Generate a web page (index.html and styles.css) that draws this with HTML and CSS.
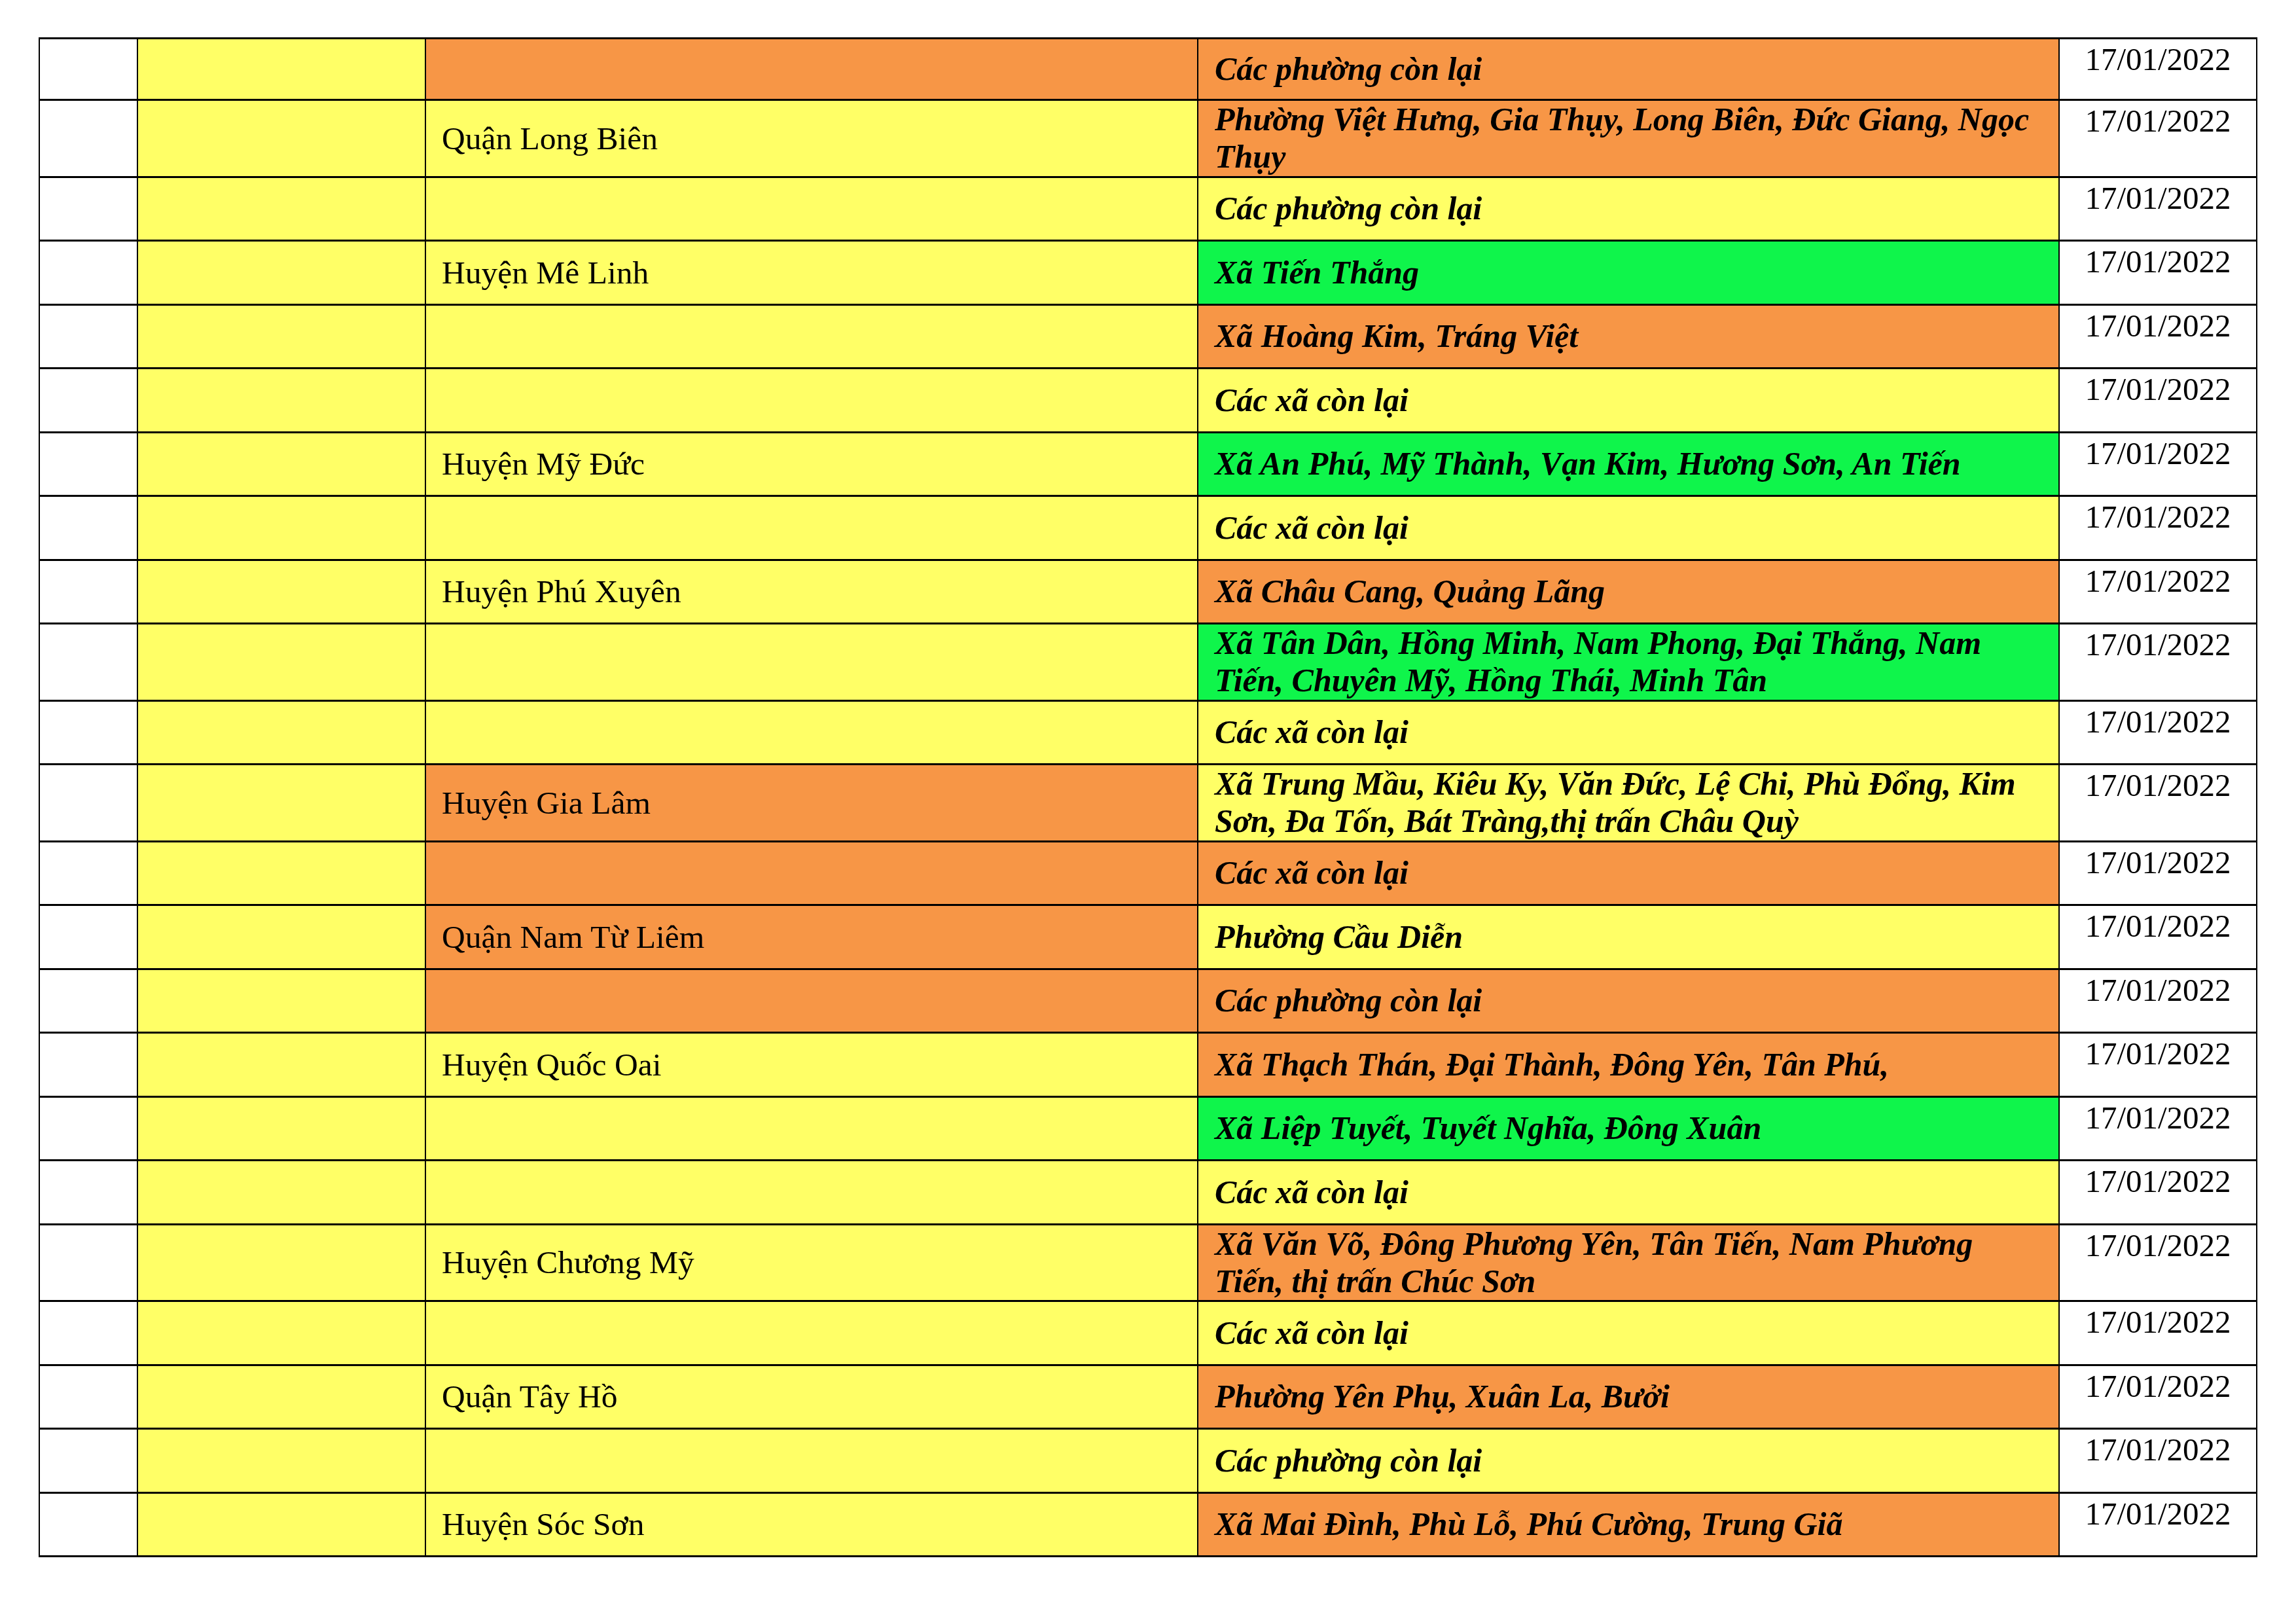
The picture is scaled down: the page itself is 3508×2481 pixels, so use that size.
FILE: index.html
```html
<!DOCTYPE html>
<html lang="vi">
<head>
<meta charset="utf-8">
<title>Danh sách</title>
<link rel="stylesheet" href="styles.css">
</head>
<body>
<table class="sheet">
  <colgroup>
    <col class="c-stt"><col class="c-city"><col class="c-dist"><col class="c-ward"><col class="c-date">
  </colgroup>
  <tbody>
    <tr class="first"><td class="w"></td><td class="y"></td><td class="dist o"></td><td class="ward o">Các phường còn lại</td><td class="date">17/01/2022</td></tr>
    <tr class="two"><td class="w"></td><td class="y"></td><td class="dist y">Quận Long Biên</td><td class="ward o">Phường Việt Hưng, Gia Thụy, Long Biên, Đức Giang, Ngọc<br>Thụy</td><td class="date">17/01/2022</td></tr>
    <tr class="one"><td class="w"></td><td class="y"></td><td class="dist y"></td><td class="ward y">Các phường còn lại</td><td class="date">17/01/2022</td></tr>
    <tr class="one"><td class="w"></td><td class="y"></td><td class="dist y">Huyện Mê Linh</td><td class="ward g">Xã Tiến Thắng</td><td class="date">17/01/2022</td></tr>
    <tr class="one"><td class="w"></td><td class="y"></td><td class="dist y"></td><td class="ward o">Xã Hoàng Kim, Tráng Việt</td><td class="date">17/01/2022</td></tr>
    <tr class="one"><td class="w"></td><td class="y"></td><td class="dist y"></td><td class="ward y">Các xã còn lại</td><td class="date">17/01/2022</td></tr>
    <tr class="one"><td class="w"></td><td class="y"></td><td class="dist y">Huyện Mỹ Đức</td><td class="ward g">Xã An Phú, Mỹ Thành, Vạn Kim, Hương Sơn, An Tiến</td><td class="date">17/01/2022</td></tr>
    <tr class="one"><td class="w"></td><td class="y"></td><td class="dist y"></td><td class="ward y">Các xã còn lại</td><td class="date">17/01/2022</td></tr>
    <tr class="one"><td class="w"></td><td class="y"></td><td class="dist y">Huyện Phú Xuyên</td><td class="ward o">Xã Châu Cang, Quảng Lãng</td><td class="date">17/01/2022</td></tr>
    <tr class="two"><td class="w"></td><td class="y"></td><td class="dist y"></td><td class="ward g">Xã Tân Dân, Hồng Minh, Nam Phong, Đại Thắng, Nam<br>Tiến, Chuyên Mỹ, Hồng Thái, Minh Tân</td><td class="date">17/01/2022</td></tr>
    <tr class="one"><td class="w"></td><td class="y"></td><td class="dist y"></td><td class="ward y">Các xã còn lại</td><td class="date">17/01/2022</td></tr>
    <tr class="two"><td class="w"></td><td class="y"></td><td class="dist o">Huyện Gia Lâm</td><td class="ward y">Xã Trung Mầu, Kiêu Ky, Văn Đức, Lệ Chi, Phù Đổng, Kim<br>Sơn, Đa Tốn, Bát Tràng,thị trấn Châu Quỳ</td><td class="date">17/01/2022</td></tr>
    <tr class="one"><td class="w"></td><td class="y"></td><td class="dist o"></td><td class="ward o">Các xã còn lại</td><td class="date">17/01/2022</td></tr>
    <tr class="one"><td class="w"></td><td class="y"></td><td class="dist o">Quận Nam Từ Liêm</td><td class="ward y">Phường Cầu Diễn</td><td class="date">17/01/2022</td></tr>
    <tr class="one"><td class="w"></td><td class="y"></td><td class="dist o"></td><td class="ward o">Các phường còn lại</td><td class="date">17/01/2022</td></tr>
    <tr class="one"><td class="w"></td><td class="y"></td><td class="dist y">Huyện Quốc Oai</td><td class="ward o">Xã Thạch Thán, Đại Thành, Đông Yên, Tân Phú,</td><td class="date">17/01/2022</td></tr>
    <tr class="one"><td class="w"></td><td class="y"></td><td class="dist y"></td><td class="ward g">Xã Liệp Tuyết, Tuyết Nghĩa, Đông Xuân</td><td class="date">17/01/2022</td></tr>
    <tr class="one"><td class="w"></td><td class="y"></td><td class="dist y"></td><td class="ward y">Các xã còn lại</td><td class="date">17/01/2022</td></tr>
    <tr class="two"><td class="w"></td><td class="y"></td><td class="dist y">Huyện Chương Mỹ</td><td class="ward o">Xã Văn Võ, Đông Phương Yên, Tân Tiến, Nam Phương<br>Tiến, thị trấn Chúc Sơn</td><td class="date">17/01/2022</td></tr>
    <tr class="one"><td class="w"></td><td class="y"></td><td class="dist y"></td><td class="ward y">Các xã còn lại</td><td class="date">17/01/2022</td></tr>
    <tr class="one"><td class="w"></td><td class="y"></td><td class="dist y">Quận Tây Hồ</td><td class="ward o">Phường Yên Phụ, Xuân La, Bưởi</td><td class="date">17/01/2022</td></tr>
    <tr class="one"><td class="w"></td><td class="y"></td><td class="dist y"></td><td class="ward y">Các phường còn lại</td><td class="date">17/01/2022</td></tr>
    <tr class="one"><td class="w"></td><td class="y"></td><td class="dist y">Huyện Sóc Sơn</td><td class="ward o">Xã Mai Đình, Phù Lỗ, Phú Cường, Trung Giã</td><td class="date">17/01/2022</td></tr>
  </tbody>
</table>
</body>
</html>
```
FILE: styles.css
```css
html, body {
  margin: 0;
  padding: 0;
  background: #ffffff;
}

body {
  font-family: "Liberation Serif", "Times New Roman", serif;
  font-size: 49px;
  line-height: 57px;
  color: #000000;
}

.sheet {
  border-collapse: collapse;
  table-layout: fixed;
  width: 3390px;
  margin-top: 57px;
  margin-left: 59px;
}

.c-stt { width: 150px; }
.c-city { width: 440px; }
.c-dist { width: 1180px; }
.c-ward { width: 1316px; }
.c-date { width: 302px; }

.sheet td {
  border-left: 2px solid #000;
  border-right: 2px solid #000;
  border-top: 3px solid #000;
  border-bottom: 3px solid #000;
  padding: 0;
  vertical-align: middle;
}

.first { height: 94px; }
.one { height: 97.5px; }
.two { height: 117.5px; }

.sheet .w { background: #ffffff; }
.sheet .y { background: #ffff66; }
.sheet .o { background: #f79646; }
.sheet .g { background: #0ff54b; }

.sheet .dist {
  padding-left: 24px;
  font-size: 49.5px;
  font-weight: normal;
}

.sheet .ward {
  padding-left: 25px;
  font-size: 50px;
  font-weight: bold;
  font-style: italic;
  white-space: nowrap;
}

.sheet .date {
  vertical-align: top;
  text-align: center;
  padding-top: 2px;
  background: #ffffff;
}
```
